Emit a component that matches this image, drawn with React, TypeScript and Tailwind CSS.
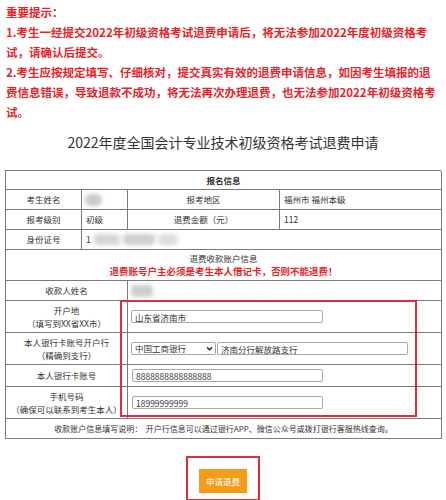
import React from "react";

const red = "text-[#e3242b]";

function Label({ children, className = "" }: { children: React.ReactNode; className?: string }) {
  return (
    <div className={`flex flex-col items-center justify-center text-center border-r border-b border-[#7a7a7a] leading-[13px] ${className}`}>
      {children}
    </div>
  );
}

function Cell({ children, className = "" }: { children?: React.ReactNode; className?: string }) {
  return (
    <div className={`flex items-center border-r border-b border-[#7a7a7a] ${className}`}>{children}</div>
  );
}

function TextInput({ value, w }: { value: string; w: string }) {
  return (
    <input
      readOnly
      value={value}
      className={`${w} h-[13px] border border-[#a8a8a8] rounded-[2px] px-[3px] text-[8.5px] leading-[11px] text-[#333] bg-white outline-none`}
    />
  );
}

export default function App() {
  return (
    <div
      className="w-[446px] min-h-[500px] bg-white text-[#333]"
      style={{ fontFamily: '"Noto Sans CJK SC", "Noto Sans", sans-serif' }}
    >
      {/* notice */}
      <div className={`pl-[6px] pt-[2px] text-[11.5px] leading-[20px] font-bold ${red} whitespace-nowrap`}>
        <div>重要提示：</div>
        <div>
          1.考生一经提交2022年初级资格考试退费申请后，将无法参加2022年度初级资格考
          <br />
          试，请确认后提交。
        </div>
        <div>
          2.考生应按规定填写、仔细核对，提交真实有效的退费申请信息，如因考生填报的退
          <br />
          费信息错误，导致退款不成功，将无法再次办理退费，也无法参加2022年初级资格考
          <br />
          试。
        </div>
      </div>

      <h1 className="mt-[10px] mb-[18px] text-center text-[14px] leading-[20px] font-normal text-[#333]">
        2022年度全国会计专业技术初级资格考试退费申请
      </h1>

      {/* table */}
      <div className="relative mx-[5px]">
        <div className="grid grid-cols-[76px_46px_152px_162px] border-l border-t border-[#7a7a7a] text-[8.5px] text-[#333]">
          <div className="col-span-4 h-[19px] flex items-center justify-center font-bold border-r border-b border-[#7a7a7a]">
            报名信息
          </div>

          <Label className="h-[20px]">考生姓名</Label>
          <Cell className="h-[20px] pl-[3px]">
            <span className="inline-block w-[17px] h-[12px] rounded-full bg-[#c9c9c9] blur-[2px]" />
          </Cell>
          <Label className="h-[20px]">报考地区</Label>
          <Cell className="h-[20px] pl-[4px]">福州市 福州本级</Cell>

          <Label className="h-[20px]">报考级别</Label>
          <Cell className="h-[20px] pl-[4px]">初级</Cell>
          <Label className="h-[20px]">退费金额（元）</Label>
          <Cell className="h-[20px] pl-[4px]">112</Cell>

          <Label className="h-[20px]">身份证号</Label>
          <Cell className="col-span-3 h-[20px] pl-[4px] gap-[3px]">
            <span>1</span>
            <span className="inline-block w-[26px] h-[11px] rounded-[4px] bg-[#d6d6d6] blur-[2px]" />
            <span className="inline-block w-[32px] h-[11px] rounded-[4px] bg-[#cfcfcf] blur-[2px]" />
            <span className="inline-block w-[20px] h-[11px] rounded-[4px] bg-[#dedede] blur-[2px]" />
          </Cell>

          <div className="col-span-4 h-[31px] flex flex-col items-center justify-center border-r border-b border-[#7a7a7a]">
            <div className="leading-[13px]">退费收款账户信息</div>
            <div className={`leading-[13px] text-[9.5px] font-bold ${red}`}>
              退费账号户主必须是考生本人借记卡，否则不能退费！
            </div>
          </div>

          <Label className="col-span-2 h-[20px]">收款人姓名</Label>
          <Cell className="col-span-2 h-[20px] pl-[3px]">
            <span className="inline-block w-[22px] h-[12px] rounded-[4px] bg-[#cdcdcd] blur-[2px]" />
          </Cell>

          <Label className="col-span-2 h-[32px]">
            <span>开户地</span>
            <span>（填写到XX省XX市）</span>
          </Label>
          <Cell className="col-span-2 h-[32px] pl-[3px]">
            <TextInput value="山东省济南市" w="w-[192px]" />
          </Cell>

          <Label className="col-span-2 h-[32px]">
            <span>本人银行卡账号开户行</span>
            <span>（精确到支行）</span>
          </Label>
          <Cell className="col-span-2 h-[32px] pl-[3px] gap-[1px]">
            <div className="relative w-[85px] h-[13px]">
              <select
                defaultValue="icbc"
                className="appearance-none w-full h-full border border-[#a8a8a8] rounded-[2px] pl-[3px] text-[8.5px] leading-[11px] text-[#333] bg-white outline-none"
              >
                <option value="icbc">中国工商银行</option>
              </select>
              <svg
                viewBox="0 0 10 10"
                className="pointer-events-none absolute right-[3px] top-[3px] w-[7px] h-[7px]"
              >
                <path d="M1.5 3.2 L5 6.8 L8.5 3.2" fill="none" stroke="#222" strokeWidth="2" />
              </svg>
            </div>
            <TextInput value="济南分行解放路支行" w="w-[191px]" />
          </Cell>

          <Label className="col-span-2 h-[22px]">本人银行卡账号</Label>
          <Cell className="col-span-2 h-[22px] pl-[4px]">
            <TextInput value="8888888888888888" w="w-[191px]" />
          </Cell>

          <Label className="col-span-2 h-[32px]">
            <span>手机号码</span>
            <span>（确保可以联系到考生本人）</span>
          </Label>
          <Cell className="col-span-2 h-[32px] pl-[4px]">
            <TextInput value="18999999999" w="w-[191px]" />
          </Cell>

          <div className="col-span-4 h-[20px] flex items-center justify-center border-r border-b border-[#7a7a7a] text-[8px]">
            收款账户信息填写说明：&nbsp; 开户行信息可以通过银行APP、微信公众号或拨打银行客服热线查询。
          </div>
        </div>

        {/* red annotation box */}
        <div className="pointer-events-none absolute left-[115px] top-[130px] w-[297px] h-[117px] border-2 border-[#dc3040]" />
      </div>

      {/* button */}
      <div className="flex justify-center mt-[17px]">
        <div className="border-2 border-[#dc3040] px-[11px] pt-[8px] pb-[6px]">
          <button className="w-[48px] h-[24px] bg-[#f39c1a] text-white text-[8.5px] leading-[24px] text-center">
            申请退费
          </button>
        </div>
      </div>
    </div>
  );
}
